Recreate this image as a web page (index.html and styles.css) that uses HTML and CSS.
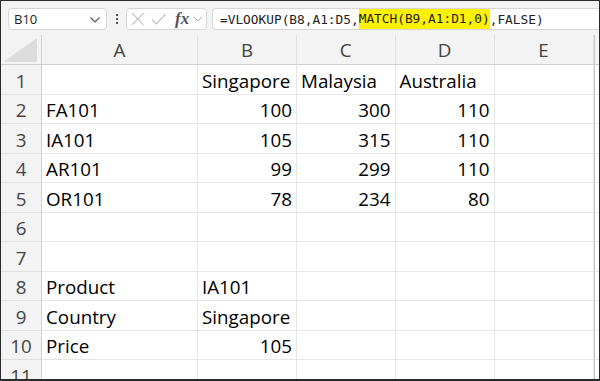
FILE: index.html
```html
<!DOCTYPE html>
<html>
<head>
<meta charset="utf-8">
<link rel="stylesheet" href="styles.css">
</head>
<body>
<div class="frame">
  <div class="toolbar">
    <div class="namebox">
      <span class="name">B10</span>
      <svg class="chev" width="12" height="8" viewBox="0 0 12 8"><path d="M1.5 1.5 L6 6 L10.5 1.5" fill="none" stroke="#555" stroke-width="1.2"/></svg>
    </div>
    <div class="dots"><i></i><i></i><i></i></div>
    <div class="fxbox">
      <svg width="16" height="16" viewBox="0 0 16 16"><path d="M2 2 L14 14 M14 2 L2 14" stroke="#bbb" stroke-width="1.1"/></svg>
      <svg width="18" height="16" viewBox="0 0 18 16"><path d="M2 8.5 L6.5 13 L16 3" fill="none" stroke="#bbb" stroke-width="1.1"/></svg>
      <span class="fx">fx</span>
      <svg width="10" height="8" viewBox="0 0 10 8"><path d="M1 2 L5 6 L9 2" fill="none" stroke="#999" stroke-width="1"/></svg>
    </div>
    <div class="formula">=VLOOKUP(B8,A1:D5,<span class="hl">MATCH(B9,A1:D1,0)</span>,FALSE)</div>
  </div>
  <div class="sheet">
    <div class="corner"><svg width="34" height="24" viewBox="0 0 34 24"><path d="M34 0 L34 24 L0 24 Z" fill="#dcdcdc"/></svg></div>
    <div class="ch">A</div><div class="ch">B</div><div class="ch">C</div><div class="ch">D</div><div class="ch">E</div><div class="ch sb"></div>

    <div class="rh">1</div><div class="c"></div><div class="c">Singapore</div><div class="c">Malaysia</div><div class="c">Australia</div><div class="c"></div><div class="c sb"></div>
    <div class="rh">2</div><div class="c">FA101</div><div class="c n">100</div><div class="c n">300</div><div class="c n">110</div><div class="c"></div><div class="c sb"></div>
    <div class="rh">3</div><div class="c">IA101</div><div class="c n">105</div><div class="c n">315</div><div class="c n">110</div><div class="c"></div><div class="c sb"></div>
    <div class="rh">4</div><div class="c">AR101</div><div class="c n">99</div><div class="c n">299</div><div class="c n">110</div><div class="c"></div><div class="c sb"></div>
    <div class="rh">5</div><div class="c">OR101</div><div class="c n">78</div><div class="c n">234</div><div class="c n">80</div><div class="c"></div><div class="c sb"></div>
    <div class="rh">6</div><div class="c"></div><div class="c"></div><div class="c"></div><div class="c"></div><div class="c"></div><div class="c sb"></div>
    <div class="rh">7</div><div class="c"></div><div class="c"></div><div class="c"></div><div class="c"></div><div class="c"></div><div class="c sb"></div>
    <div class="rh">8</div><div class="c">Product</div><div class="c">IA101</div><div class="c"></div><div class="c"></div><div class="c"></div><div class="c sb"></div>
    <div class="rh">9</div><div class="c">Country</div><div class="c">Singapore</div><div class="c"></div><div class="c"></div><div class="c"></div><div class="c sb"></div>
    <div class="rh">10</div><div class="c">Price</div><div class="c n">105</div><div class="c"></div><div class="c"></div><div class="c"></div><div class="c sb"></div>
    <div class="rh">11</div><div class="c"></div><div class="c"></div><div class="c"></div><div class="c"></div><div class="c"></div><div class="c sb"></div>
  </div>
</div>
</body>
</html>
```
FILE: styles.css
```css
* { box-sizing: border-box; }
html, body { margin: 0; padding: 0; background: #fff; }
.frame {
  width: 600px; height: 381px; overflow: hidden;
  border: 1px solid #2b2b2b; border-bottom-width: 2px;
  display: flex; flex-direction: column;
  background: #fff;
}
.toolbar {
  height: 34px; flex: none; background: #f3f3f3;
  display: flex; align-items: flex-start; padding: 7px 0 0 7px;
  font-family: "Open Sans", "Noto Sans", sans-serif;
}
.namebox {
  width: 99px; height: 22px; background: #fff; border: 1px solid #d6d6d6; border-radius: 4px;
  display: flex; align-items: center; justify-content: space-between; padding: 0 5px 0 5px;
}
.name { font-size: 13px; color: #222; }
.chev { margin-top: 1px; }
.dots { width: 19px; height: 22px; display: flex; flex-direction: column; align-items: center; justify-content: center; gap: 2px; }
.dots i { display: block; width: 2px; height: 2px; background: #555; }
.fxbox {
  width: 81px; height: 22px; background: #fff; border: 1px solid #d6d6d6; border-radius: 4px;
  display: flex; align-items: center; gap: 4px; padding: 0 3px;
}
.fx { font-family: "Liberation Serif", serif; font-style: italic; font-weight: bold; font-size: 17px; color: #555; margin-left: 4px; }
.formula {
  margin-left: 5px; flex: 1; height: 22px; background: #fff; border: 1px solid #d6d6d6; border-right: none;
  border-radius: 4px 0 0 4px;
  font-family: "DejaVu Sans Mono", monospace; font-size: 12.8px; color: #222;
  display: flex; align-items: center; padding-left: 7px; white-space: pre;
}
.hl { background: #fff200; display: inline-block; line-height: 20px; }
.sheet {
  flex: 1; display: grid;
  grid-template-columns: 41px 156px 99px 98.5px 99px 99px 1fr;
  grid-template-rows: 30px repeat(11, 29.5px);
  font-family: "Open Sans", "Noto Sans", sans-serif; font-size: 18.8px; color: #000;
  background: #fff;
}
.corner { background: #f3f3f3; border-bottom: 1px solid #d0d0d0; border-right: 1px solid #d0d0d0; display: flex; align-items: flex-end; justify-content: flex-end; padding: 0 4px 2px 0; }
.ch { background: #f3f3f3; border-bottom: 1px solid #d0d0d0; border-right: 1px solid #e0e0e0; display: flex; align-items: center; justify-content: center; color: #444; padding-top: 1px; }
.rh { background: #f3f3f3; border-right: 1px solid #d0d0d0; border-bottom: 1px solid #e0e0e0; display: flex; align-items: center; justify-content: center; color: #444; padding-top: 3px; }
.c { border-right: 1px solid #e6e6e6; border-bottom: 1px solid #e6e6e6; display: flex; align-items: center; padding: 3px 4px 0 4px; white-space: nowrap; overflow: visible; }
.c.n { justify-content: flex-end; }
.sb { border-right: none; border-left: 1px solid #c8c8c8; }
```
